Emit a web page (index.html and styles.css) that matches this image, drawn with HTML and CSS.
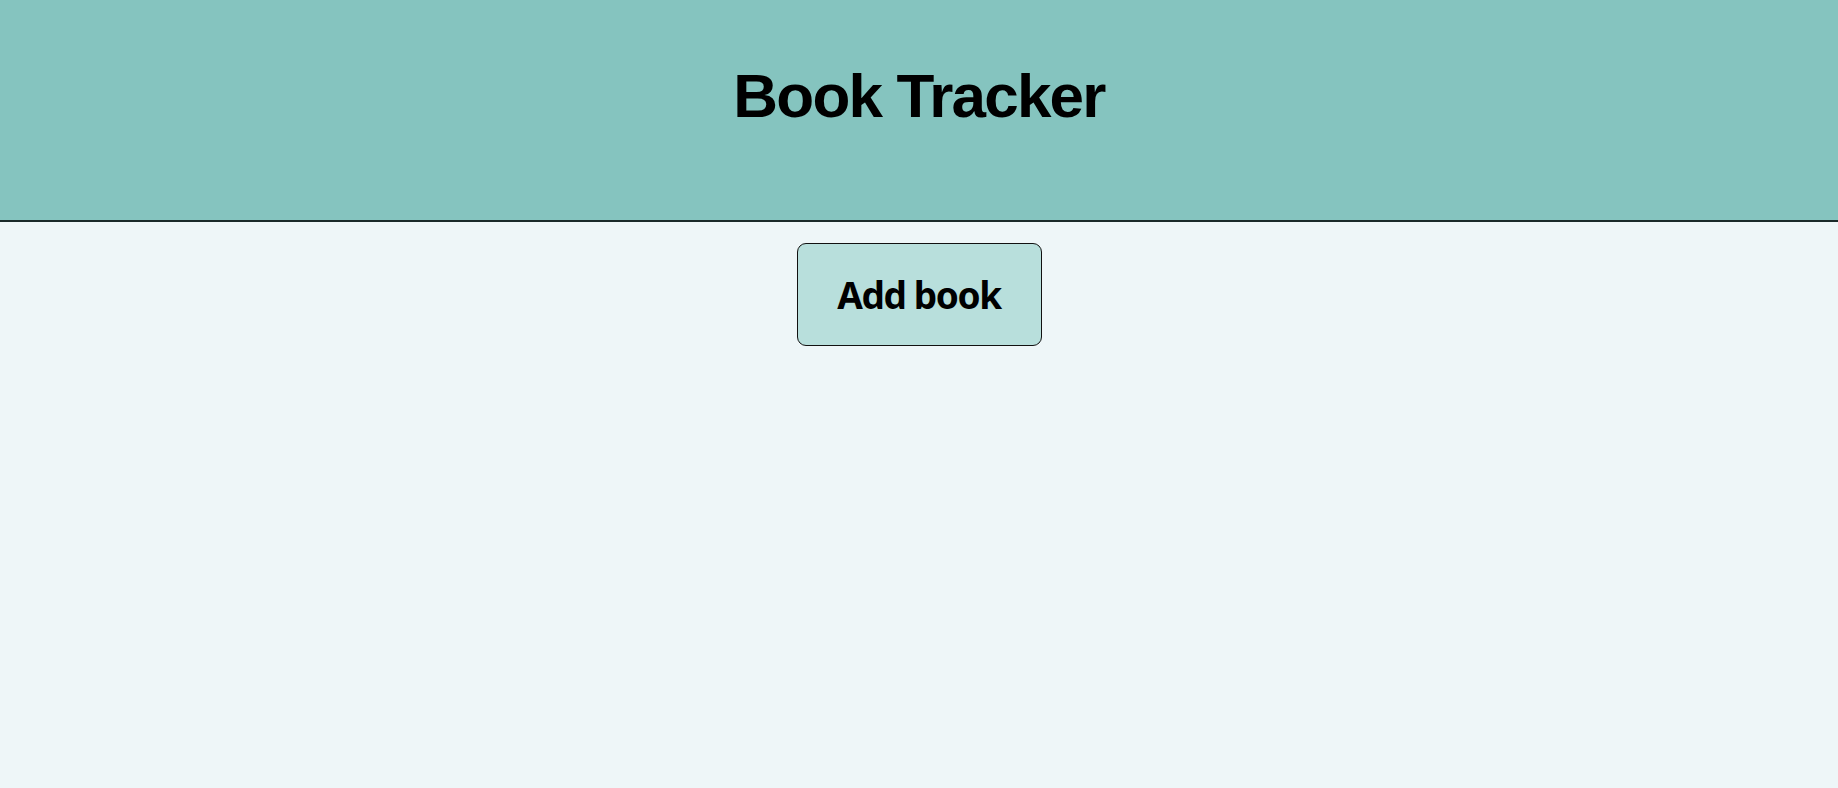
FILE: index.html
```html
<!DOCTYPE html>
<html>
<head>
<meta charset="utf-8">
<link rel="stylesheet" href="styles.css">
</head>
<body>
<header class="header">
  <h1 class="title">Book Tracker</h1>
</header>
<main class="main">
  <button class="add-btn">Add book</button>
</main>
</body>
</html>
```
FILE: styles.css
```css
html, body {
  margin: 0;
  padding: 0;
  height: 100%;
}
body {
  background: #eef6f8;
  font-family: "Liberation Sans", Arial, sans-serif;
}
.header {
  background: #85c4bf;
  height: 220px;
  border-bottom: 2px solid #1a2a2a;
  display: flex;
  justify-content: center;
  align-items: flex-start;
}
.title {
  margin: 0;
  padding-top: 60px;
  font-size: 62px;
  line-height: 72px;
  font-weight: bold;
  letter-spacing: -1.8px;
  color: #000;
}
.main {
  display: flex;
  justify-content: center;
  padding-top: 21px;
}
.add-btn {
  width: 245px;
  height: 103px;
  background: #b8dfdc;
  border: 1px solid #111;
  border-radius: 9px;
  font-family: "Noto Sans", "Open Sans", sans-serif;
  font-weight: 700;
  font-size: 37px;
  letter-spacing: -1.4px;
  color: #000;
  padding: 0;
}
```
